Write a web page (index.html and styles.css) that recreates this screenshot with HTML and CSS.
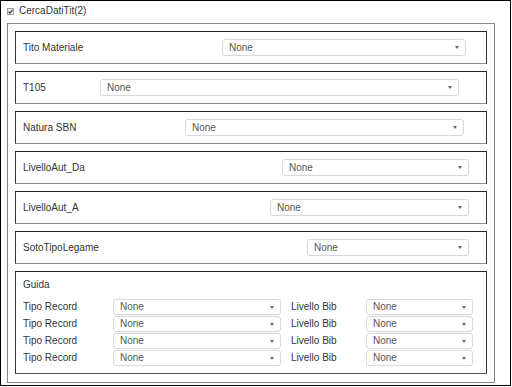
FILE: index.html
```html
<!DOCTYPE html>
<html>
<head>
<meta charset="utf-8">
<link rel="stylesheet" href="styles.css">
</head>
<body>
<div class="frame">
  <div class="header">
    <span class="check"><svg width="5" height="5" viewBox="0 0 5 5"><path d="M0.5 2.6 L2 4 L4.6 0.8" fill="none" stroke="#333" stroke-width="1.2"/></svg></span>
    <span class="title">CercaDatiTit(2)</span>
  </div>
  <div class="group">
    <div class="box">
      <span class="label">Tito Materiale</span>
      <div class="select s1"><span>None</span><i class="arrow"></i></div>
    </div>
    <div class="box">
      <span class="label">T105</span>
      <div class="select s2"><span>None</span><i class="arrow"></i></div>
    </div>
    <div class="box">
      <span class="label">Natura SBN</span>
      <div class="select s3"><span>None</span><i class="arrow"></i></div>
    </div>
    <div class="box">
      <span class="label">LivelloAut_Da</span>
      <div class="select s4"><span>None</span><i class="arrow"></i></div>
    </div>
    <div class="box">
      <span class="label">LivelloAut_A</span>
      <div class="select s5"><span>None</span><i class="arrow"></i></div>
    </div>
    <div class="box">
      <span class="label">SotoTipoLegame</span>
      <div class="select s6"><span>None</span><i class="arrow"></i></div>
    </div>
    <div class="guida">
      <div class="guida-title">Guida</div>
      <div class="grid">
        <span class="glabel">Tipo Record</span>
        <div class="select gs"><span>None</span><i class="arrow"></i></div>
        <span class="glabel l2">Livello Bib</span>
        <div class="select gs"><span>None</span><i class="arrow"></i></div>
        <span class="glabel">Tipo Record</span>
        <div class="select gs"><span>None</span><i class="arrow"></i></div>
        <span class="glabel l2">Livello Bib</span>
        <div class="select gs"><span>None</span><i class="arrow"></i></div>
        <span class="glabel">Tipo Record</span>
        <div class="select gs"><span>None</span><i class="arrow"></i></div>
        <span class="glabel l2">Livello Bib</span>
        <div class="select gs"><span>None</span><i class="arrow"></i></div>
        <span class="glabel">Tipo Record</span>
        <div class="select gs"><span>None</span><i class="arrow"></i></div>
        <span class="glabel l2">Livello Bib</span>
        <div class="select gs"><span>None</span><i class="arrow"></i></div>
      </div>
    </div>
  </div>
</div>
</body>
</html>
```
FILE: styles.css
```css
* { box-sizing: border-box; }
html, body { margin: 0; padding: 0; background: #fff; }
body {
  font-family: "Liberation Sans", Arial, sans-serif;
  font-size: 10px;
  color: #333;
}
.frame {
  width: 511px;
  height: 386px;
  border: 1px solid #000;
}
.header {
  height: 22px;
  display: flex;
  align-items: center;
  padding-left: 6px;
  padding-bottom: 2px;
}
.check {
  width: 7px;
  height: 7px;
  border: 1px solid #9a9a9a;
  background: #f4f4f4;
  display: flex;
  align-items: center;
  justify-content: center;
  margin-right: 5px;
}
.check svg { display: block; }
.title { color: #333; line-height: 12px; }
.group {
  margin-left: 6px;
  width: 488px;
  border: 1px solid #858585;
  padding: 7px 7px 8px 7px;
  display: flex;
  flex-direction: column;
  gap: 7px;
}
.box {
  height: 33px;
  border: 1px solid #333;
  border-top-color: #222;
  border-bottom-color: #8a8a8a;
  display: flex;
  align-items: center;
  padding-left: 7px;
}
.label { line-height: 12px; }
.select {
  height: 17px;
  border: 1px solid #d6d8dc;
  border-radius: 3px;
  background: #fff;
  display: flex;
  align-items: center;
  justify-content: space-between;
  padding: 0 6px 0 6px;
  color: #555;
  line-height: 12px;
}
.arrow {
  width: 0;
  height: 0;
  border-left: 2px solid transparent;
  border-right: 2px solid transparent;
  border-top: 3px solid #666;
}
.box .select { margin-left: auto; }
.s1 { width: 244px; margin-right: 20px; }
.s2 { width: 359px; margin-right: 27px; }
.s3 { width: 279px; margin-right: 22px; }
.s4 { width: 187px; margin-right: 17px; }
.s5 { width: 199px; margin-right: 17px; }
.s6 { width: 162px; margin-right: 17px; }
.guida {
  height: 103px;
  border: 1px solid #333;
  border-top-color: #222;
  border-bottom-color: #555;
  padding: 7px 0 0 7px;
}
.guida-title { height: 12px; line-height: 12px; margin-bottom: 8px; }
.grid {
  display: grid;
  grid-template-columns: 90px 168px 85px 107px;
  grid-auto-rows: 16px;
  row-gap: 1px;
  align-items: center;
}
.grid .select { height: 16px; }
.glabel { line-height: 12px; }
.l2 { padding-left: 10px; }
```
